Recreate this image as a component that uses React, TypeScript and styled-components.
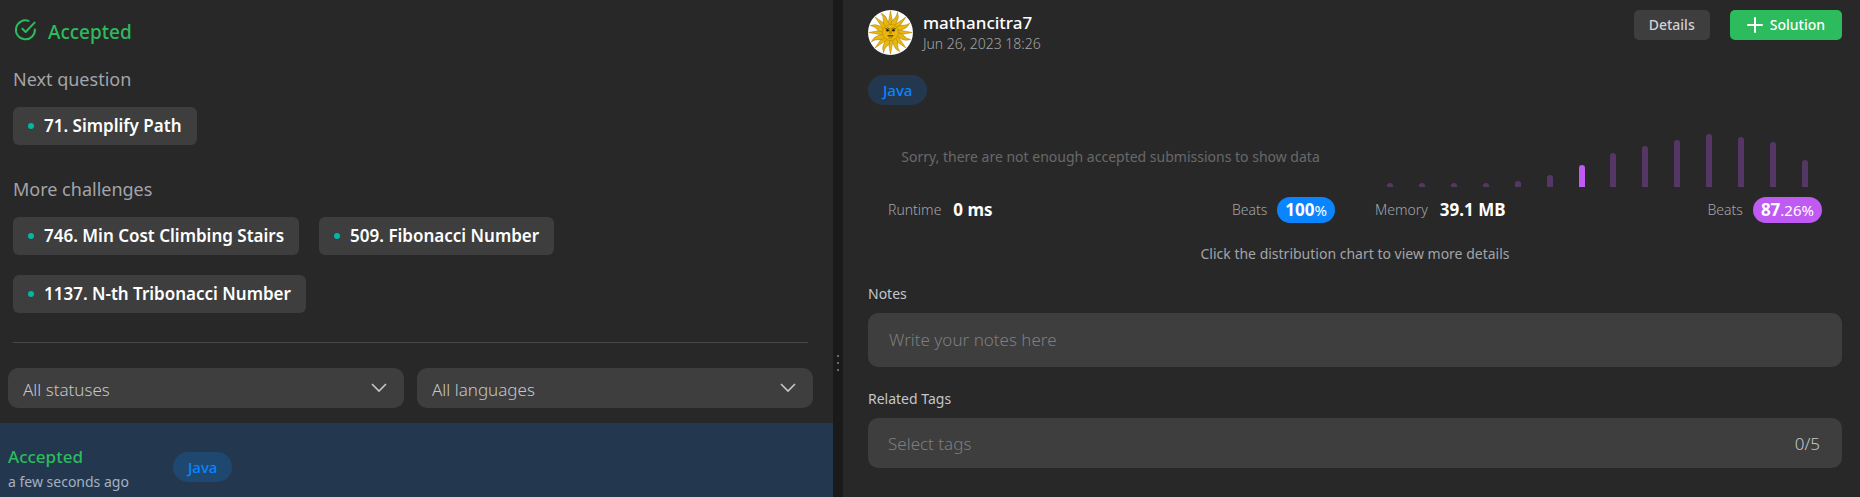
import React from 'react';
import styled, { createGlobalStyle, css } from 'styled-components';

const color = {
  panel: '#282828',
  gutter: '#1a1a1a',
  fill: '#3e3e3e',
  text: '#ffffff',
  soft: '#c4c6ca',
  muted: '#a3a4a8',
  faint: '#7d7d7f',
  green: '#2cbb5d',
  blue: '#0a84ff',
  purple: '#bf5af2',
  teal: '#00b8a3',
};

const GlobalStyle = createGlobalStyle`
  *, *::before, *::after { box-sizing: border-box; }
  body {
    margin: 0;
    background: ${color.panel};
    color: ${color.text};
    font-family: 'Noto Sans', 'Open Sans', sans-serif;
    font-size: 14px;
    line-height: 20px;
  }
  h1, h2, p { margin: 0; }
  button, input, select, textarea { font: inherit; color: inherit; border: 0; margin: 0; }
`;

const Page = styled.div`
  display: grid;
  grid-template-columns: minmax(0, 833fr) 10px minmax(0, 1017fr);
  min-height: 100vh;
`;

/* ---------- left panel ---------- */

const ResultPanel = styled.main`
  display: flex;
  flex-direction: column;
  padding-top: 18px;
`;

const ResultBody = styled.div`
  padding: 0 25px 0 13px;
`;

const ResultHeader = styled.header`
  display: flex;
  gap: 11px;
  height: 28px;
  color: ${color.green};
`;

const ResultTitle = styled.h1`
  font-size: 19px;
  font-weight: 500;
  line-height: 28px;
`;

const GroupTitle = styled.h2<{ $first?: boolean }>`
  margin-top: ${(p) => (p.$first ? 21 : 32)}px;
  color: ${color.muted};
  font-size: 18px;
  font-weight: 400;
  line-height: 24px;
`;

const ChipList = styled.div`
  display: flex;
  flex-wrap: wrap;
  gap: 20px;
  margin-top: 16px;
`;

const Chip = styled.a`
  display: flex;
  align-items: center;
  gap: 10px;
  height: 38px;
  padding: 0 15px;
  border-radius: 6px;
  background: ${color.fill};
  color: ${color.text};
  font-size: 17px;
  font-weight: 600;
  line-height: 24px;
  text-decoration: none;

  &::before {
    content: '';
    width: 6px;
    height: 6px;
    border-radius: 50%;
    background: ${color.teal};
  }
`;

const Rule = styled.hr`
  height: 1px;
  margin: 29px 0 25px;
  border: 0;
  background: #484848;
`;

const Filters = styled.div`
  display: grid;
  grid-template-columns: 1fr 1fr;
  gap: 13px;
  padding: 0 20px 0 8px;
`;

const SelectBox = styled.div`
  position: relative;

  svg {
    position: absolute;
    top: 50%;
    right: 17px;
    transform: translateY(-50%);
    pointer-events: none;
  }
`;

const Select = styled.select`
  display: block;
  width: 100%;
  height: 40px;
  padding: 3px 44px 0 15px;
  border-radius: 10px;
  appearance: none;
  background: ${color.fill};
  color: ${color.soft};
  font-size: 17px;
  font-weight: 300;
`;

const Submission = styled.section`
  display: grid;
  flex: 1;
  grid-template-columns: 165px 1fr;
  align-items: start;
  margin-top: 15px;
  padding: 22px 8px 5px;
  background: #23384f;
`;

const SubmissionStatus = styled.p`
  color: ${color.green};
  font-size: 17px;
  font-weight: 500;
  line-height: 24px;
`;

const SubmissionTime = styled.p`
  margin-top: 3px;
  color: #a5b0c0;
`;

const Language = styled.span<{ $row?: boolean }>`
  display: inline-flex;
  align-items: center;
  align-self: flex-start;
  justify-self: start;
  height: 30px;
  padding: 0 15px;
  border-radius: 15px;
  background: ${(p) => (p.$row ? '#1f4871' : '#23384f')};
  color: ${color.blue};
  font-size: 15px;
  font-weight: 500;
  ${(p) => p.$row && css`margin-top: 7px;`}
`;

/* ---------- gutter ---------- */

const Gutter = styled.div`
  display: flex;
  flex-direction: column;
  align-items: center;
  gap: 5px;
  padding-top: 355px;
  background: ${color.gutter};
`;

const GutterDot = styled.i`
  width: 2px;
  height: 2px;
  background: #6a6a6a;
`;

/* ---------- right panel ---------- */

const DetailPanel = styled.aside`
  display: flex;
  flex-direction: column;
  padding: 10px 18px 29px 25px;
`;

const Profile = styled.header`
  display: flex;
  align-items: flex-start;
  margin-bottom: 20px;
`;

const ProfileText = styled.div`
  flex: 1;
  padding: 2px 0 0 10px;
`;

const UserName = styled.p`
  font-size: 17px;
  font-weight: 500;
  line-height: 22px;
`;

const PostedAt = styled.p`
  color: ${color.muted};
  font-weight: 300;
`;

const Actions = styled.div`
  display: flex;
  gap: 20px;
`;

const ActionButton = styled.button<{ $primary?: boolean }>`
  display: flex;
  align-items: center;
  gap: 7px;
  height: 30px;
  padding: 0 ${(p) => (p.$primary ? 17 : 15)}px;
  border-radius: 5px;
  background: ${(p) => (p.$primary ? color.green : color.fill)};
  color: ${(p) => (p.$primary ? color.text : '#d0d2d6')};
  font-size: 14px;
  font-weight: 500;
`;

const Charts = styled.div`
  display: grid;
  grid-template-columns: 1fr 1fr;
  margin-top: 21px;
`;

const Plot = styled.div<{ $empty?: boolean }>`
  display: flex;
  align-items: ${(p) => (p.$empty ? 'center' : 'flex-end')};
  justify-content: ${(p) => (p.$empty ? 'center' : 'space-between')};
  height: 61px;
  padding: 0 34px 0 32px;
  color: #68686a;
  white-space: nowrap;
`;

const Bar = styled.i<{ $active?: boolean }>`
  width: 6px;
  border-radius: 3px 3px 0 0;
  background: ${(p) => (p.$active ? color.purple : '#553765')};
`;

const Metric = styled.div`
  display: flex;
  align-items: center;
  gap: 10px;
  height: 26px;
  margin: 10px 20px 0;
`;

const MetricName = styled.span<{ $end?: boolean }>`
  margin: ${(p) => (p.$end ? '0 0 0 auto' : '0 2px 0 0')};
  color: ${color.muted};
  font-weight: 300;
`;

const MetricValue = styled.strong`
  font-size: 17px;
  font-weight: 700;
`;

const Beats = styled.span<{ $tone: string }>`
  height: 26px;
  padding: 0 8px;
  border-radius: 13px;
  background: ${(p) => p.$tone};
  font-size: 15px;
  line-height: 26px;
`;

const Hint = styled.p`
  margin: 21px 0 20px;
  color: #a3a4a8;
  text-align: center;
`;

const FieldLabel = styled.label`
  margin-bottom: 9px;
  color: #c4c6ca;
`;

const fieldText = css`
  font-size: 17px;
  font-weight: 300;
  line-height: 24px;

  &::placeholder { color: ${color.faint}; opacity: 1; }
`;

const Notes = styled.textarea`
  display: block;
  width: 100%;
  height: 54px;
  margin-bottom: 22px;
  padding: 15px 21px;
  border-radius: 10px;
  background: ${color.fill};
  resize: none;
  overflow: hidden;
  ${fieldText}
`;

const TagField = styled.div`
  display: flex;
  align-items: center;
  height: 50px;
  padding: 2px 22px 0 20px;
  border-radius: 10px;
  background: ${color.fill};
`;

const TagInput = styled.input`
  flex: 1;
  min-width: 0;
  padding: 0;
  background: transparent;
  ${fieldText}
`;

const TagCount = styled.span`
  color: ${color.soft};
  font-size: 17px;
  font-weight: 300;
`;

/* ---------- drawings ---------- */

const AcceptedIcon = () => (
  <svg width="24" height="24" viewBox="0 0 24 24" fill="none" stroke="currentColor" strokeWidth="2" strokeLinecap="round" strokeLinejoin="round" aria-hidden="true">
    <path d="M15.6 2.9A9.5 9.5 0 1 0 21.9 11.4" />
    <path d="M9.4 10.8l3.2 3.2L21.6 4.6" />
  </svg>
);

const Chevron = () => (
  <svg width="16" height="10" viewBox="0 0 16 10" fill="none" stroke={color.soft} strokeWidth="1.6" aria-hidden="true">
    <path d="M1 1l7 7 7-7" />
  </svg>
);

const Plus = () => (
  <svg width="16" height="16" viewBox="0 0 16 16" stroke="currentColor" strokeWidth="2" strokeLinecap="round" aria-hidden="true">
    <path d="M8 1v14M1 8h14" />
  </svg>
);

const rays = Array.from({ length: 16 }, (_, i) => i);

const SunAvatar = () => (
  <svg width="45" height="45" viewBox="-22.5 -22.5 45 45" role="img" aria-label="mathancitra7">
    <circle r="22.5" fill="#fff" />
    {rays.map((i) => (
      <path
        key={i}
        transform={`rotate(${i * 22.5})`}
        d={i % 2 ? 'M-2.6-7Q-4-11-1.8-14.4Q-.4-17-1.2-21.2Q2.4-17 1.8-13.4Q1.2-10 3-7Z' : 'M-2.7-7L0-21.8L2.7-7Z'}
        fill="#e9b80c"
        stroke="#a87c12"
        strokeWidth=".5"
      />
    ))}
    <circle r="8" fill="#e9b80c" stroke="#b58810" strokeWidth=".6" />
    <g fill="none" stroke="#6b4308" strokeLinecap="round">
      <path d="M-5.2-3.8q2-1.6 4-.2M5.2-3.8q-2-1.6-4-.2" strokeWidth=".8" />
      <path d="M-.8-2.6v3.4h1.6v-3.4" strokeWidth=".5" />
      <path d="M-2.2 3.2h4.4" strokeWidth="1.6" />
      <path d="M-1.4 5.4h2.8" strokeWidth=".5" />
    </g>
    <circle cx="-3" cy="-2.3" r="1.3" fill="#2d1c05" />
    <circle cx="3" cy="-2.3" r="1.3" fill="#2d1c05" />
  </svg>
);

const memoryBars = [4, 4, 4, 4, 6, 12, 22, 34, 41, 47, 53, 50, 45, 27];
const ownBar = 6;

const challenges = ['746. Min Cost Climbing Stairs', '509. Fibonacci Number', '1137. N-th Tribonacci Number'];

const Filter = ({ name, label }: { name: string; label: string }) => (
  <SelectBox>
    <Select name={name} aria-label={label}>
      <option>{label}</option>
    </Select>
    <Chevron />
  </SelectBox>
);

export default function App() {
  return (
    <>
      <GlobalStyle />
      <Page>
        <ResultPanel>
          <ResultBody>
            <ResultHeader>
              <AcceptedIcon />
              <ResultTitle>Accepted</ResultTitle>
            </ResultHeader>
            <GroupTitle $first>Next question</GroupTitle>
            <ChipList>
              <Chip href="#71">71. Simplify Path</Chip>
            </ChipList>
            <GroupTitle>More challenges</GroupTitle>
            <ChipList>
              {challenges.map((title) => (
                <Chip key={title} href={`#${title.split('.')[0]}`}>{title}</Chip>
              ))}
            </ChipList>
            <Rule />
          </ResultBody>
          <Filters>
            <Filter name="status" label="All statuses" />
            <Filter name="language" label="All languages" />
          </Filters>
          <Submission>
            <div>
              <SubmissionStatus>Accepted</SubmissionStatus>
              <SubmissionTime>a few seconds ago</SubmissionTime>
            </div>
            <Language $row>Java</Language>
          </Submission>
        </ResultPanel>

        <Gutter>
          <GutterDot />
          <GutterDot />
          <GutterDot />
        </Gutter>

        <DetailPanel>
          <Profile>
            <SunAvatar />
            <ProfileText>
              <UserName>mathancitra7</UserName>
              <PostedAt>Jun 26, 2023 18:26</PostedAt>
            </ProfileText>
            <Actions>
              <ActionButton type="button">Details</ActionButton>
              <ActionButton type="button" $primary>
                <Plus />
                Solution
              </ActionButton>
            </Actions>
          </Profile>
          <Language>Java</Language>
          <Charts>
            <section>
              <Plot $empty>Sorry, there are not enough accepted submissions to show data</Plot>
              <Metric>
                <MetricName>Runtime</MetricName>
                <MetricValue>0 ms</MetricValue>
                <MetricName $end>Beats</MetricName>
                <Beats $tone={color.blue}>
                  <MetricValue>100</MetricValue>%
                </Beats>
              </Metric>
            </section>
            <section>
              <Plot>
                {memoryBars.map((height, i) => (
                  <Bar key={i} $active={i === ownBar} style={{ height }} />
                ))}
              </Plot>
              <Metric>
                <MetricName>Memory</MetricName>
                <MetricValue>39.1 MB</MetricValue>
                <MetricName $end>Beats</MetricName>
                <Beats $tone={color.purple}>
                  <MetricValue>87</MetricValue>.26%
                </Beats>
              </Metric>
            </section>
          </Charts>
          <Hint>Click the distribution chart to view more details</Hint>
          <FieldLabel htmlFor="notes">Notes</FieldLabel>
          <Notes id="notes" rows={1} placeholder="Write your notes here" />
          <FieldLabel htmlFor="tags">Related Tags</FieldLabel>
          <TagField>
            <TagInput id="tags" type="text" placeholder="Select tags" />
            <TagCount>0/5</TagCount>
          </TagField>
        </DetailPanel>
      </Page>
    </>
  );
}
